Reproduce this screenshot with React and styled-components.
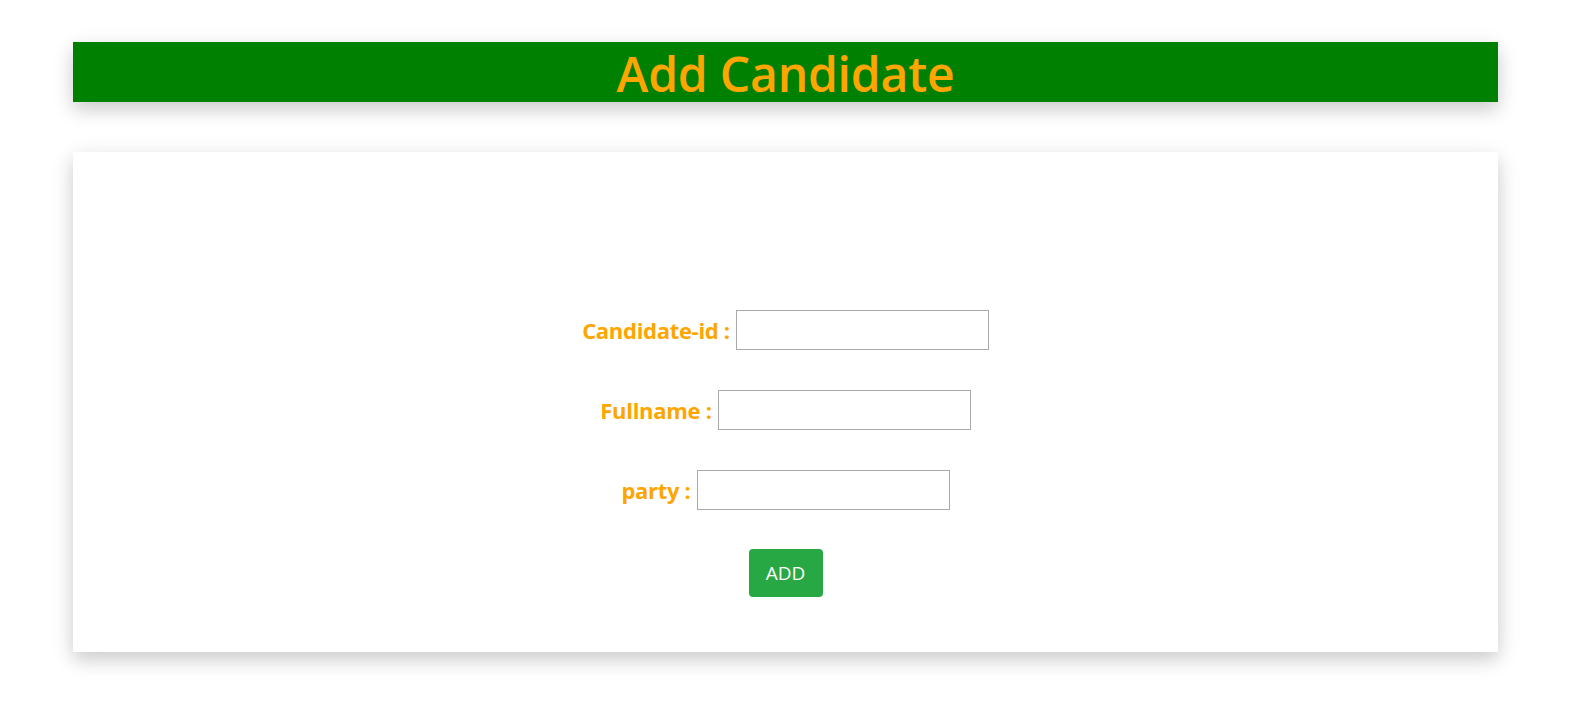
import React from "react";
import styled, { createGlobalStyle } from "styled-components";

const GlobalStyle = createGlobalStyle`
  html, body { margin: 0; padding: 0; background: #ffffff; }
  body { font-family: "Open Sans", "Noto Sans", sans-serif; }
`;

const Page = styled.div`
  padding: 42px 80px 60px 73px;
  display: flex;
  flex-direction: column;
  gap: 50px;
`;

const Header = styled.div`
  height: 60px;
  background: #008000;
  display: flex;
  align-items: center;
  justify-content: center;
  box-shadow: 0 8px 16px 0 rgba(0, 0, 0, 0.12), 0 6px 24px 0 rgba(0, 0, 0, 0.1);
`;

const Title = styled.h1`
  margin: 0;
  color: #ffa500;
  font-family: "Open Sans", sans-serif;
  font-weight: 600;
  font-size: 48px;
  line-height: 60px;
  letter-spacing: -0.2px;
  transform: translateY(2px);
`;

const Card = styled.div`
  height: 500px;
  box-sizing: border-box;
  padding-top: 158px;
  background: #ffffff;
  box-shadow: 0 8px 16px 0 rgba(0, 0, 0, 0.12), 0 6px 24px 0 rgba(0, 0, 0, 0.1);
`;

const Form = styled.form`
  display: flex;
  flex-direction: column;
  align-items: center;
  gap: 40px;
`;

const Row = styled.div`
  display: flex;
  align-items: center;
  justify-content: center;
  gap: 6px;
  height: 40px;
`;

const Label = styled.label`
  color: #ffa500;
  font-family: "Open Sans", sans-serif;
  font-weight: 700;
  font-size: 22px;
  letter-spacing: -0.3px;
`;

const Input = styled.input`
  box-sizing: border-box;
  width: 253px;
  height: 40px;
  border: 1px solid #a9a9a9;
  border-radius: 0;
  padding: 0 8px;
  outline: none;
  font-size: 16px;
`;

const Button = styled.button`
  margin-top: -1px;
  width: 74px;
  height: 48px;
  border: none;
  border-radius: 4px;
  background: #28a745;
  color: #ffffff;
  font-family: "Open Sans", sans-serif;
  font-size: 19px;
  font-weight: 400;
  cursor: pointer;
`;

export default function App() {
  return (
    <>
      <GlobalStyle />
      <Page>
        <Header>
          <Title>Add Candidate</Title>
        </Header>
        <Card>
          <Form onSubmit={(e) => e.preventDefault()}>
            <Row>
              <Label htmlFor="cid">Candidate-id :</Label>
              <Input id="cid" type="text" />
            </Row>
            <Row>
              <Label htmlFor="fullname">Fullname :</Label>
              <Input id="fullname" type="text" />
            </Row>
            <Row>
              <Label htmlFor="party">party :</Label>
              <Input id="party" type="text" />
            </Row>
            <Button type="submit">ADD</Button>
          </Form>
        </Card>
      </Page>
    </>
  );
}
